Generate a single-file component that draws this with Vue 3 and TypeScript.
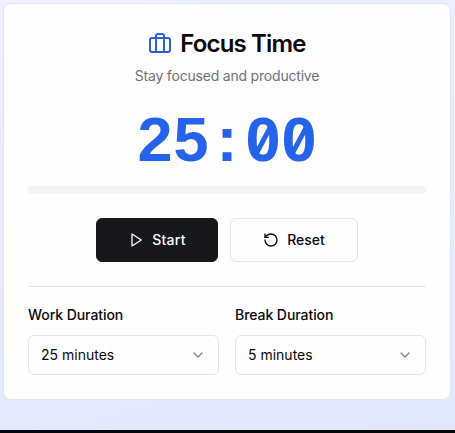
<script setup lang="ts">
import { computed, ref, onBeforeUnmount } from 'vue'

interface DurationField {
  id: string
  label: string
  minutes: number
}

const fields: DurationField[] = [
  { id: 'work', label: 'Work Duration', minutes: 25 },
  { id: 'break', label: 'Break Duration', minutes: 5 },
]

const total = fields[0].minutes * 60
const remaining = ref(total)
let timer: number | undefined

const clock = computed(() => {
  const m = String(Math.floor(remaining.value / 60)).padStart(2, '0')
  const s = String(remaining.value % 60).padStart(2, '0')
  return `${m}:${s}`.split('')
})
const progress = computed(() => ((total - remaining.value) / total) * 100)

function stop() {
  window.clearInterval(timer)
  timer = undefined
}
function start() {
  if (timer !== undefined) return
  timer = window.setInterval(() => {
    if (remaining.value > 0) remaining.value--
    else stop()
  }, 1000)
}
function reset() {
  stop()
  remaining.value = total
}
onBeforeUnmount(stop)
</script>

<template>
  <main class="page">
    <section class="card">
      <header class="header">
        <h1 class="title">
          <svg class="icon brand" viewBox="0 0 24 24">
            <path d="M16 20V4a2 2 0 0 0-2-2h-4a2 2 0 0 0-2 2v16" />
            <rect width="20" height="14" x="2" y="6" rx="2" />
          </svg>
          <span>Focus Time</span>
        </h1>
        <p class="subtitle">Stay focused and productive</p>
      </header>

      <div class="clock">
        <span v-for="(c, i) in clock" :key="i" class="cell" :class="{ zero: c === '0' }">{{ c }}</span>
      </div>

      <div class="track"><div class="fill" :style="{ width: progress + '%' }"></div></div>

      <div class="actions">
        <button class="btn primary" @click="start">
          <svg class="icon" viewBox="0 0 24 24"><polygon points="6 3 20 12 6 21 6 3" /></svg>
          <span>Start</span>
        </button>
        <button class="btn outline" @click="reset">
          <svg class="icon" viewBox="0 0 24 24">
            <path d="M3 12a9 9 0 1 0 9-9 9.75 9.75 0 0 0-6.74 2.74L3 8" />
            <path d="M3 3v5h5" />
          </svg>
          <span>Reset</span>
        </button>
      </div>

      <div class="settings">
        <div v-for="f in fields" :key="f.id" class="field">
          <span class="label">{{ f.label }}</span>
          <button class="select">
            <span>{{ f.minutes }} minutes</span>
            <svg class="icon chevron" viewBox="0 0 24 24"><path d="m6 9 6 6 6-6" /></svg>
          </button>
        </div>
      </div>
    </section>
  </main>
</template>

<style>
body {
  background: #06070b;
}
</style>

<style scoped>
.page {
  box-sizing: border-box;
  height: 430px;
  padding: 3px 4px 0 3px;
  background: linear-gradient(165deg, #eff1fe 0%, #e8ebfe 55%, #e1e7fd 100%);
  font-family: Inter, "Liberation Sans", sans-serif;
  color: #09090b;
}
.card {
  box-sizing: border-box;
  height: 397px;
  padding: 24px;
  border: 1px solid #e2e4f0;
  border-radius: 8px;
  background: #fefefe;
}
.header {
  display: flex;
  flex-direction: column;
  align-items: center;
}
.title {
  display: flex;
  align-items: center;
  gap: 8px;
  margin: 0;
  font-size: 24px;
  line-height: 32px;
  font-weight: 600;
  letter-spacing: -0.85px;
}
.icon {
  width: 16px;
  height: 16px;
  flex: none;
  fill: none;
  stroke: currentColor;
  stroke-width: 2;
  stroke-linecap: round;
  stroke-linejoin: round;
}
.brand {
  width: 24px;
  height: 24px;
  color: #2b61d2;
}
.subtitle {
  margin: 6px 0 0;
  font-size: 14px;
  line-height: 20px;
  letter-spacing: -0.2px;
  color: #71717a;
}
.clock {
  display: flex;
  justify-content: center;
  margin-top: 23px;
  font-family: "Liberation Sans", sans-serif;
  font-size: 63px;
  line-height: 60px;
  font-weight: 700;
  color: #2563eb;
}
.cell {
  position: relative;
  width: 36px;
  display: flex;
  justify-content: center;
}
/* diagonal stroke of the slashed zero */
.zero::after {
  content: "";
  position: absolute;
  left: 15.5px;
  top: 15px;
  width: 5px;
  height: 32px;
  background: currentColor;
  transform: rotate(28deg);
}
.track {
  height: 8px;
  margin-top: 17px;
  border-radius: 4px;
  overflow: hidden;
  background: #f4f4f5;
}
.fill {
  height: 100%;
  background: #18181b;
}
.actions {
  display: flex;
  justify-content: center;
  gap: 12px;
  margin-top: 24px;
}
.btn {
  box-sizing: border-box;
  display: flex;
  align-items: center;
  justify-content: center;
  gap: 8px;
  height: 44px;
  padding: 0;
  border: 1px solid #e4e4e7;
  border-radius: 6px;
  background: #fefefe;
  font: 500 14px/20px Inter, "Liberation Sans", sans-serif;
  color: #09090b;
}
.primary {
  width: 122px;
  border-color: #18181a;
  background: #18181a;
  color: #fafafa;
  letter-spacing: 0.3px;
}
.outline {
  width: 128px;
}
.settings {
  display: grid;
  grid-template-columns: 1fr 1fr;
  gap: 16px;
  margin-top: 24px;
  padding-top: 18px;
  border-top: 1px solid #e4e4e7;
}
.field {
  display: flex;
  flex-direction: column;
  gap: 10px;
}
.label {
  font-size: 14px;
  line-height: 20px;
  font-weight: 500;
  letter-spacing: -0.06px;
}
.select {
  box-sizing: border-box;
  display: flex;
  align-items: center;
  justify-content: space-between;
  height: 40px;
  padding: 0 12px;
  border: 1px solid #e4e4e7;
  border-radius: 6px;
  background: #fefefe;
  font: 400 14px/20px Inter, "Liberation Sans", sans-serif;
  color: #09090b;
}
.chevron {
  color: #858588;
}
</style>
